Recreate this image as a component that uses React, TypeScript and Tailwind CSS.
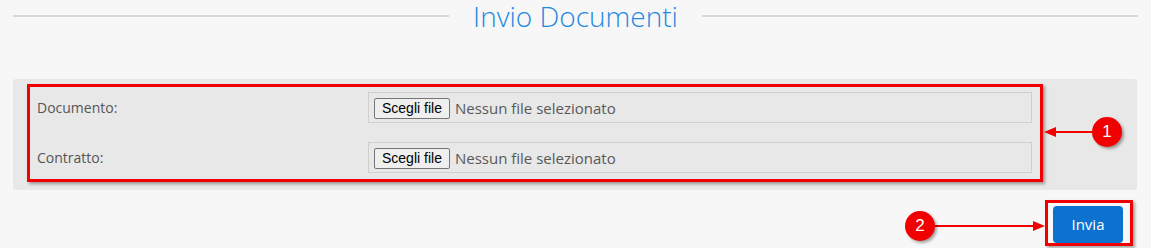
import React from "react";

const FileField = () => (
  <div className="flex items-center h-[31px] border border-[#cfcfcf] bg-[#e8e8e8] pl-[5px] pt-[2px]">
    <span className="h-[21px] px-[7px] flex items-center border border-[#767676] rounded-[2px] bg-[#efefef] text-[14px] text-black font-['Liberation_Sans',Arial,sans-serif]">
      Scegli file
    </span>
    <span className="ml-[5px] text-[15px] text-[#585858]">Nessun file selezionato</span>
  </div>
);

const Badge = ({ n, className }: { n: string; className: string }) => (
  <div
    className={`absolute w-[30px] h-[30px] rounded-full bg-[#f00000] text-white text-[17px] flex items-center justify-center shadow-[2px_2px_3px_rgba(0,0,0,0.35)] font-['Liberation_Sans',Arial,sans-serif] ${className}`}
  >
    {n}
  </div>
);

export default function App() {
  return (
    <div className="relative w-[1151px] h-[248px] overflow-hidden bg-[#f7f7f7] font-['Open_Sans',sans-serif]">
      {/* title */}
      <div className="flex items-center h-[32px] px-[13px]">
        <div className="flex-1 h-[2px] bg-[#d8d8d8]" />
        <h1 className="px-[24px] text-[28px] font-light leading-[32px] text-[#1f8ae0]">Invio Documenti</h1>
        <div className="flex-1 h-[2px] bg-[#d8d8d8]" />
      </div>

      {/* form panel */}
      <div className="mt-[47px] ml-[13px] mr-[14px] h-[111px] bg-[#e8e8e8] rounded-[3px] pt-[13px] pl-[24px] pr-[105px] flex flex-col gap-[19px]">
        <div className="grid grid-cols-[331px_1fr] items-center">
          <span className="text-[14px] text-[#555]">Documento:</span>
          <FileField />
        </div>
        <div className="grid grid-cols-[331px_1fr] items-center">
          <span className="text-[14px] text-[#555]">Contratto:</span>
          <FileField />
        </div>
      </div>

      <div className="flex justify-end mt-[16px] pr-[28px]">
        <button className="w-[70px] h-[37px] rounded-[4px] bg-[#0b72cf] text-white text-[15px]">Invia</button>
      </div>

      {/* annotations */}
      <div className="absolute left-[27px] top-[84px] w-[1016px] h-[98px] border-[3px] border-[#f00000] shadow-[2px_2px_3px_rgba(0,0,0,0.35)]" />
      <div className="absolute left-[1045px] top-[200px] w-[88px] h-[46px] border-[3px] border-[#f00000] shadow-[2px_2px_3px_rgba(0,0,0,0.35)]" />
      <svg className="absolute inset-0" width="1151" height="248">
        <line x1="1094" y1="132" x2="1052" y2="132" stroke="#f00000" strokeWidth="2" />
        <polygon points="1044,132 1056,127 1056,137" fill="#f00000" />
        <line x1="934" y1="226" x2="1036" y2="226" stroke="#f00000" strokeWidth="2" />
        <polygon points="1045,226 1033,221 1033,231" fill="#f00000" />
      </svg>
      <Badge n="1" className="left-[1092px] top-[117px]" />
      <Badge n="2" className="left-[905px] top-[211px]" />
    </div>
  );
}
